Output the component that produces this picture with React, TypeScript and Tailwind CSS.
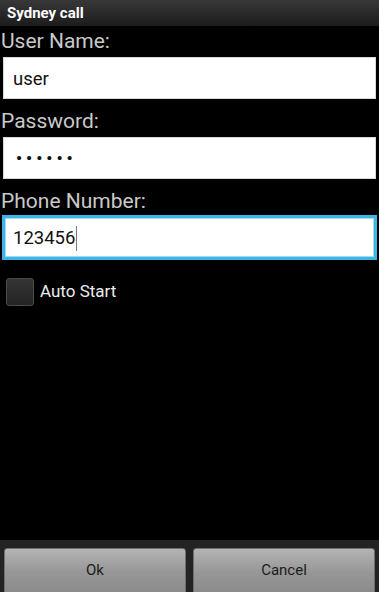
import React from 'react'

const font = { fontFamily: 'Roboto, "Liberation Sans", sans-serif' }

function Field({ label, children }: { label: string; children: React.ReactNode }) {
  return (
    <div className="flex flex-col">
      <div className="h-[25px] leading-[25px] text-[21px] text-[#c9c9c9] pl-[1px]">{label}</div>
      {children}
    </div>
  )
}

export default function App() {
  return (
    <div className="w-[379px] h-[592px] bg-black flex flex-col overflow-hidden" style={font}>
      <div className="h-[26px] shrink-0 bg-gradient-to-b from-[#383838] to-[#1c1c1c] flex items-center pl-[7px]">
        <span className="text-[15px] font-bold text-white leading-none">Sydney call</span>
      </div>

      <div className="flex flex-col gap-[10px] pt-[3px]">
        <Field label="User Name:">
          <div className="mt-[3px] mx-[3px] h-[42px] bg-white border border-[#d8d8d8] flex items-center pl-[9px] pt-[3px]">
            <span className="text-[18.5px] text-[#111]">user</span>
          </div>
        </Field>
        <Field label="Password:">
          <div className="mt-[3px] mx-[3px] h-[42px] bg-white border border-[#d8d8d8] flex items-center pl-[12px] pt-[2px]">
            <span className="text-[17px] font-bold text-[#111] tracking-[4px]">••••••</span>
          </div>
        </Field>
        <Field label="Phone Number:">
          <div className="mt-[1px] mx-[2px] h-[45px] bg-white border-[3px] border-[#3db6e6] shadow-[inset_0_0_0_1px_#9fdcf4] flex items-center pl-[8px] pt-[2px]">
            <span className="text-[18.5px] text-[#111]">123456</span>
            <span className="w-px h-[25px] bg-[#777] ml-[1px]" />
          </div>
        </Field>
      </div>

      <div className="flex items-center gap-[6px] pl-[6px] mt-[18px]">
        <div className="w-[28px] h-[28px] rounded-[3px] border border-[#4a4a4a] bg-gradient-to-b from-[#333534] to-[#232423]" />
        <span className="text-[17px] text-[#ececec]">Auto Start</span>
      </div>

      <div className="mt-auto h-[52px] shrink-0 bg-[#232323] flex gap-[7px] px-[4px] pt-[8px]">
        <button className="flex-1 h-[48px] rounded-[3px] border border-[#6f6f6f] bg-gradient-to-b from-[#b4b4b4] via-[#979797] to-[#8a8a8a] text-[15px] text-[#1c1c1c] pb-[4px]">
          Ok
        </button>
        <button className="flex-1 h-[48px] rounded-[3px] border border-[#6f6f6f] bg-gradient-to-b from-[#b4b4b4] via-[#979797] to-[#8a8a8a] text-[15px] text-[#1c1c1c] pb-[4px]">
          Cancel
        </button>
      </div>
    </div>
  )
}
